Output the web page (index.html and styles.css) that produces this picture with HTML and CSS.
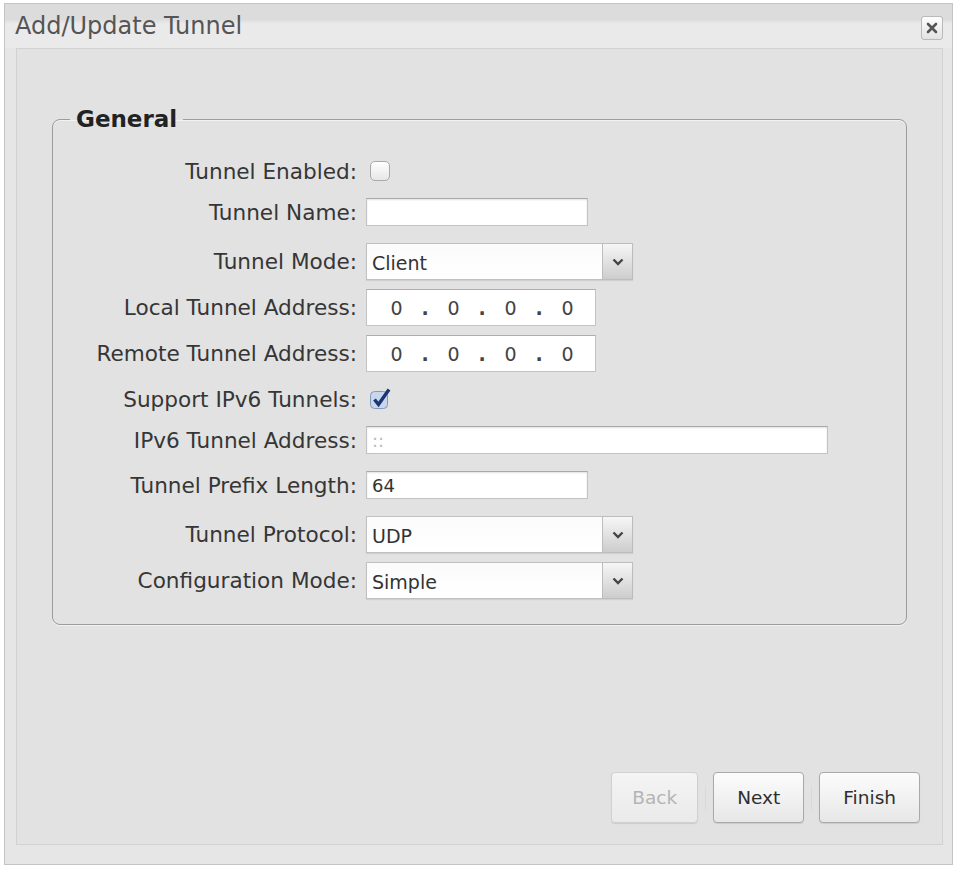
FILE: index.html
```html
<!DOCTYPE html>
<html lang="en">

<head>
    <meta charset="UTF-8">
    <meta name="viewport" content="width=device-width, initial-scale=1.0">
    <title>Add/Update Tunnel</title>
    <link rel="stylesheet" href="styles.css">
</head>

<body>
    <div class="dialog">
        <!-- title bar -->
        <div class="titlebar">
            <span class="title">Add/Update Tunnel</span>
            <button class="close" aria-label="Close">
                <svg width="12" height="12" viewBox="0 0 12 12">
                    <path d="M2 2 L10 10 M10 2 L2 10" stroke="#555" stroke-width="2.6" stroke-linecap="round" />
                </svg>
            </button>
        </div>

        <div class="panel">
            <fieldset class="group">
                <legend>General</legend>

                <div class="row row-check">
                    <label>Tunnel Enabled:</label>
                    <span class="check"></span>
                </div>

                <div class="row row-text">
                    <label>Tunnel Name:</label>
                    <input type="text" class="field">
                </div>

                <div class="row">
                    <label>Tunnel Mode:</label>
                    <div class="select">
                        <span class="select-value">Client</span>
                        <span class="select-arrow">
                            <svg width="12" height="8" viewBox="0 0 12 8">
                                <path d="M1.5 1.5 L6 6 L10.5 1.5" fill="none" stroke="#444" stroke-width="2.4" />
                            </svg>
                        </span>
                    </div>
                </div>

                <div class="row">
                    <label>Local Tunnel Address:</label>
                    <div class="ip">
                        <span class="octet">0</span><span class="dot">.</span>
                        <span class="octet">0</span><span class="dot">.</span>
                        <span class="octet">0</span><span class="dot">.</span>
                        <span class="octet">0</span>
                    </div>
                </div>

                <div class="row">
                    <label>Remote Tunnel Address:</label>
                    <div class="ip">
                        <span class="octet">0</span><span class="dot">.</span>
                        <span class="octet">0</span><span class="dot">.</span>
                        <span class="octet">0</span><span class="dot">.</span>
                        <span class="octet">0</span>
                    </div>
                </div>

                <div class="row row-check">
                    <label>Support IPv6 Tunnels:</label>
                    <svg class="check-on" width="24" height="24" viewBox="0 0 24 24">
                        <rect x="2.5" y="4.5" width="17" height="17" rx="4" fill="#c8d7ec" stroke="#8499ba" />
                        <path d="M6.5 12.5 L10.5 17.5 L21 2.5" fill="none" stroke="#1c3672" stroke-width="3.4" />
                    </svg>
                </div>

                <div class="row row-text">
                    <label>IPv6 Tunnel Address:</label>
                    <input type="text" class="field field-wide" placeholder="::">
                </div>

                <div class="row row-text">
                    <label>Tunnel Prefix Length:</label>
                    <input type="text" class="field" value="64">
                </div>

                <div class="row">
                    <label>Tunnel Protocol:</label>
                    <div class="select">
                        <span class="select-value">UDP</span>
                        <span class="select-arrow">
                            <svg width="12" height="8" viewBox="0 0 12 8">
                                <path d="M1.5 1.5 L6 6 L10.5 1.5" fill="none" stroke="#444" stroke-width="2.4" />
                            </svg>
                        </span>
                    </div>
                </div>

                <div class="row">
                    <label>Configuration Mode:</label>
                    <div class="select">
                        <span class="select-value">Simple</span>
                        <span class="select-arrow">
                            <svg width="12" height="8" viewBox="0 0 12 8">
                                <path d="M1.5 1.5 L6 6 L10.5 1.5" fill="none" stroke="#444" stroke-width="2.4" />
                            </svg>
                        </span>
                    </div>
                </div>
            </fieldset>

            <!-- wizard buttons -->
            <div class="buttons">
                <button class="btn" disabled>Back</button>
                <span class="sep"></span>
                <button class="btn">Next</button>
                <span class="sep"></span>
                <button class="btn">Finish</button>
            </div>
        </div>
    </div>
</body>

</html>
```

FILE: styles.css
```css
body {
    margin: 0;
    background: #fff;
    font-family: "DejaVu Sans", sans-serif;
    color: #363636;
}

.dialog {
    box-sizing: border-box;
    height: 862px;
    margin: 3px 3px 0 4px;
    border: 1px solid #c4c4c4;
    background: #e6e6e6;
    display: flex;
    flex-direction: column;
}

.titlebar {
    height: 44px;
    display: flex;
    align-items: center;
    justify-content: space-between;
    padding: 0 9px 0 10px;
    background: linear-gradient(#dcdcdc 0, #dcdcdc 35%, #eaeaea 45%, #eaeaea 100%);
}

.title {
    font-size: 24px;
    color: #555;
}

.close {
    width: 22px;
    height: 24px;
    margin-top: 3px;
    padding: 0;
    border: 1px solid #b9b9b9;
    border-radius: 3px;
    background: linear-gradient(#fdfdfd, #e3e3e3);
    display: flex;
    align-items: center;
    justify-content: center;
}

.panel {
    flex: 1;
    margin: 0 9px 19px 11px;
    border: 1px solid #d2d2d2;
    background: #e2e2e2;
    display: flex;
    flex-direction: column;
}

/* general group */
.group {
    margin: 57px 35px 0;
    padding: 21px 0 25px;
    border: 1px solid #9c9c9c;
    border-radius: 8px;
    box-shadow: 0 1px 0 #f2f2f2, inset 0 1px 0 #f2f2f2;
    display: flex;
    flex-direction: column;
    gap: 9px;

    & legend {
        margin-left: 17px;
        padding: 0 6px;
        font-size: 23px;
        font-weight: bold;
        color: #222;
    }
}

.row {
    display: flex;
    align-items: center;

    & label {
        width: 304px;
        margin-right: 9px;
        text-align: right;
        font-size: 21.6px;
        white-space: nowrap;
    }
}

.row-check {
    height: 36px;
}

.row-text {
    padding-bottom: 8px;
}

.check {
    box-sizing: border-box;
    width: 20px;
    height: 20px;
    margin-left: 4px;
    border: 1px solid #a9a9a9;
    border-radius: 5px;
    background: linear-gradient(#fff, #e6e6e6);
}

.check-on {
    margin-left: 2px;
}

.field {
    box-sizing: border-box;
    width: 222px;
    height: 28px;
    margin: 0;
    padding: 0 5px;
    border: 1px solid #c3c3c3;
    border-top-color: #a9a9a9;
    box-shadow: inset 0 1px 2px rgba(0, 0, 0, 0.12);
    background: #fff;
    font-family: "DejaVu Sans", sans-serif;
    font-size: 18px;
    color: #333;

    &::placeholder {
        color: #bbb;
    }
}

.field-wide {
    width: 462px;
}

.select {
    display: flex;
    width: 267px;
    height: 37px;
    box-shadow: 0 1px 1px rgba(0, 0, 0, 0.08);
}

.select-value {
    flex: 1;
    display: flex;
    align-items: center;
    padding: 2px 0 0 5px;
    border: 1px solid #c0c0c0;
    border-right: none;
    background: linear-gradient(#fbfbfb, #fff);
    font-size: 19px;
    color: #333;
}

.select-arrow {
    width: 29px;
    display: flex;
    align-items: center;
    justify-content: center;
    border: 1px solid #bdbdbd;
    background: linear-gradient(#f6f6f6, #cdcdcd);
}

.ip {
    box-sizing: border-box;
    width: 230px;
    height: 37px;
    display: flex;
    align-items: center;
    padding-left: 15px;
    border: 1px solid #c3c3c3;
    border-top-color: #adadad;
    background: #fff;
    font-size: 19px;
    color: #444;

    & .octet {
        width: 29px;
        text-align: center;
    }

    & .dot {
        width: 28px;
        text-align: center;
        font-weight: bold;
    }
}

/* wizard buttons */
.buttons {
    flex: 1;
    display: flex;
    justify-content: flex-end;
    align-items: flex-end;
    padding: 0 22px 21px;
}

.btn {
    height: 51px;
    padding: 0 23px;
    border: 1px solid #a9a9a9;
    border-radius: 4px;
    background: linear-gradient(#fcfcfc, #e7e7e7);
    box-shadow: 0 1px 1px rgba(0, 0, 0, 0.1);
    font-family: "DejaVu Sans", sans-serif;
    font-size: 18.5px;
    color: #2e2e2e;

    &:disabled {
        padding: 0 20px;
        color: #b4b4b4;
        border-color: #d0d0d0;
        background: linear-gradient(#f4f4f4, #eaeaea);
    }
}

.sep {
    width: 1px;
    height: 24px;
    margin: 0 7px 13px;
    background: #cfdbe6;
}
```
